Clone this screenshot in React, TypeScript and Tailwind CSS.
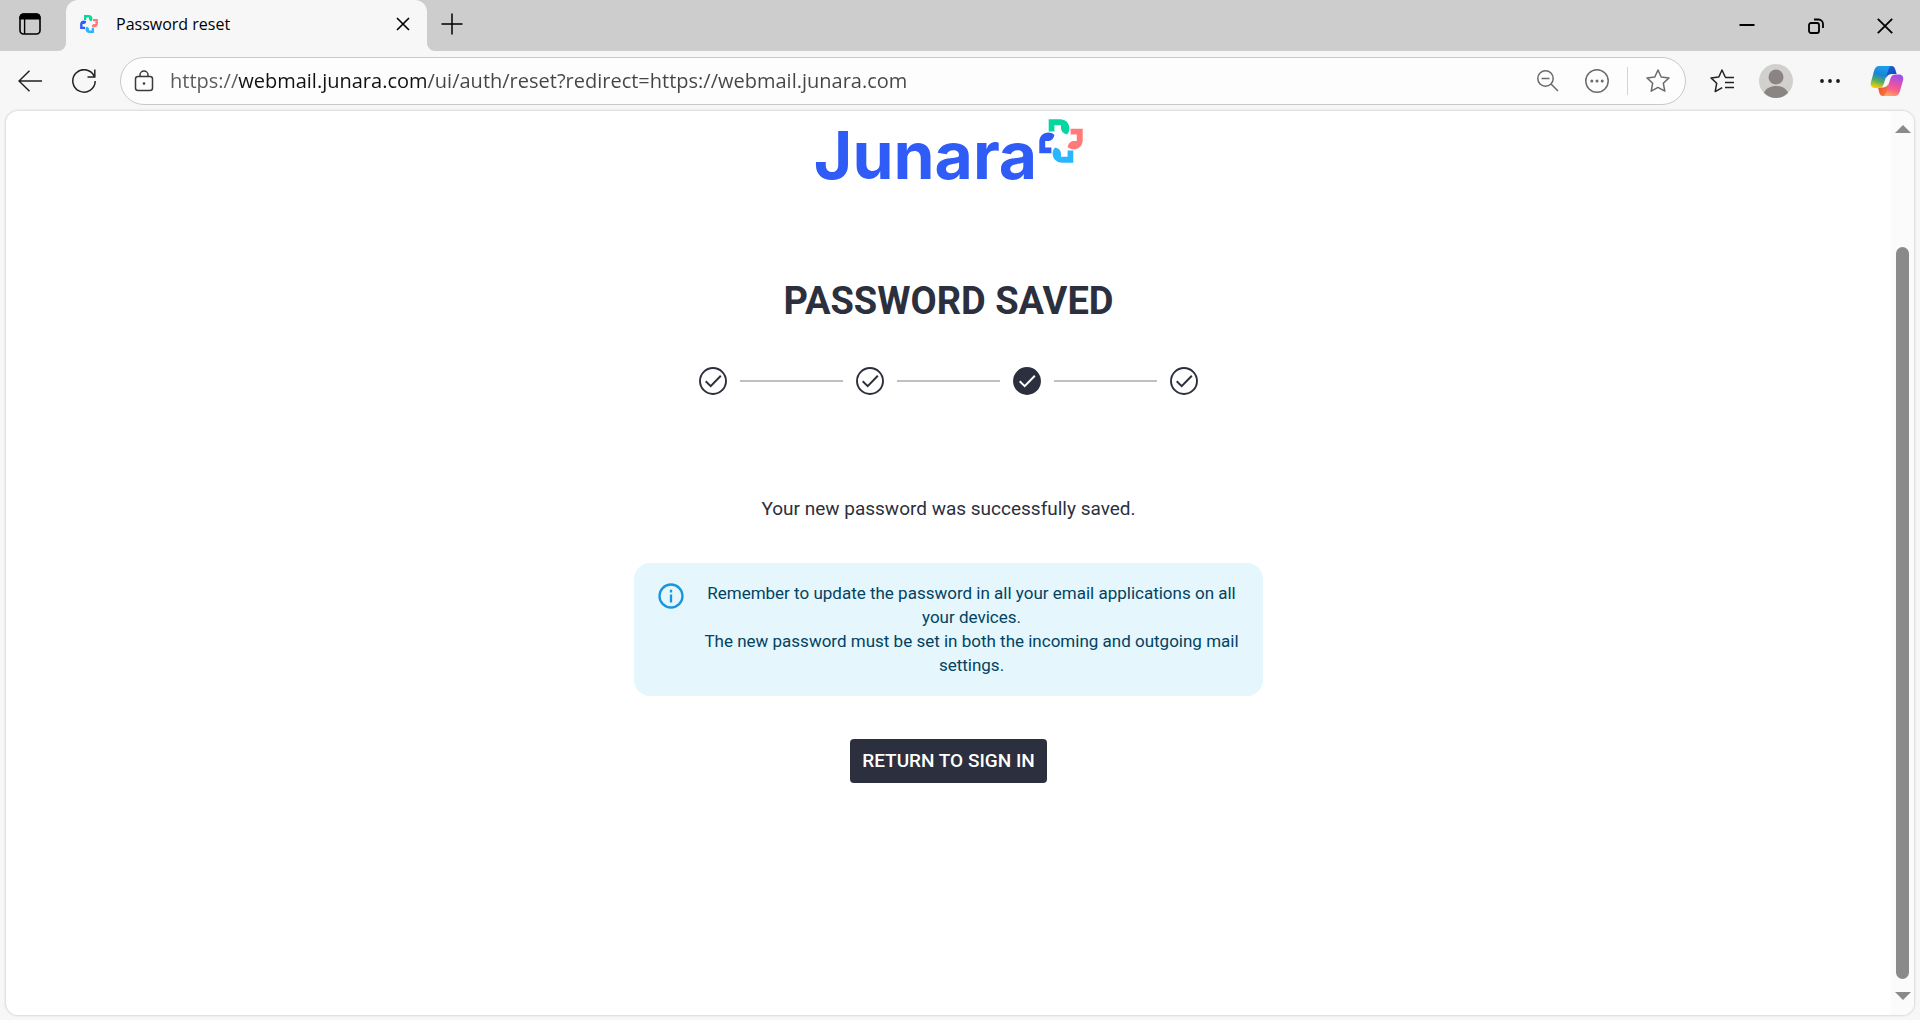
import React from 'react';
import { clsx } from 'clsx';

interface IconProps {
  className?: string;
}

const petals = ['#06d6a0', '#ff7a78', '#29b6ff', '#2f5bf6'];

// The mark is one hook shape, turned a quarter for each colour
const JunaraMark: React.FC<IconProps> = ({ className }) => (
  <svg viewBox="-22 -22 44 44" className={className} aria-hidden="true">
    {petals.map((color, i) => (
      <path
        key={color}
        fill={color}
        transform={`rotate(${i * 90})`}
        d="M-12.3-21.7H-1C4.6-21.7 8.4-17.800 8.4-12.6C8.4-10.4 7.6-8.400 6-6.6C2.300-7.4 .2-9.4 0-12.4V-15.8H-6.6V-9.600H-12.3Z"
      />
    ))}
  </svg>
);

const WorkspacesIcon: React.FC = () => (
  <svg viewBox="0 0 22 22" className="size-[22px]" fill="none" stroke="#000" aria-hidden="true">
    <rect x="1" y="1" width="20" height="20" rx="3.5" strokeWidth="1.6" />
    <path d="M1 6V4a3 3 0 0 1 3-3h14a3 3 0 0 1 3 3v2z" fill="#000" />
    <path d="M5.6 6v15" strokeWidth="1.4" />
  </svg>
);

const LockIcon: React.FC = () => (
  <svg viewBox="0 0 20 22" className="h-[22px] w-5" fill="none" stroke="#3b3b3b" strokeWidth="1.5" aria-hidden="true">
    <rect x="1.5" y="6.5" width="17" height="14" rx="2.5" />
    <path d="M6 6.5V5a4 4 0 0 1 8 0v1.5" />
    <circle cx="10" cy="13.5" r="1.3" fill="#3b3b3b" stroke="none" />
  </svg>
);

const CopilotIcon: React.FC = () => (
  <svg viewBox="0 0 34 32" className="h-8 w-[34px]" aria-hidden="true">
    <defs>
      <linearGradient id="cp-left" x1="0.6" y1="0" x2="0.35" y2="1">
        <stop offset="0.1" stopColor="#1b9bea" />
        <stop offset="0.4" stopColor="#1c83d6" />
        <stop offset="0.7" stopColor="#58ad5c" />
        <stop offset="1" stopColor="#f5cf0a" />
      </linearGradient>
      <linearGradient id="cp-right" x1="0.65" y1="0" x2="0.35" y2="1">
        <stop offset="0" stopColor="#9b50f0" />
        <stop offset="0.4" stopColor="#dc52b0" />
        <stop offset="0.7" stopColor="#f9608a" />
        <stop offset="1" stopColor="#ffa65a" />
      </linearGradient>
      <linearGradient id="cp-top" x1="0" y1="0" x2="1" y2="1">
        <stop offset="0" stopColor="#1a62d8" />
        <stop offset="1" stopColor="#1546b8" />
      </linearGradient>
      <linearGradient id="cp-bottom" x1="0" y1="0" x2="1" y2="1">
        <stop offset="0" stopColor="#ee4a2c" />
        <stop offset="1" stopColor="#fb7d45" />
      </linearGradient>
    </defs>
    <path d="M16 1h5.5c2 0 3 1.2 3.6 3l1.6 5h-4.5c-3 0-5 1.2-6 4z" fill="url(#cp-top)" />
    <path d="M18 31h-5c-2 0-3-1.2-3.6-3L8 22.5h4.5c3 0 5-1.2 6-4z" fill="url(#cp-bottom)" />
    <path d="M9 1h12.5c-1.8.5-2.5 2-3.2 4l-4.6 14c-.9 2.7-2.4 4-5 4H5c-3.4 0-5-2.400-4-6L4 6c1-3.300 2.500-5 5-5z" fill="url(#cp-left)" />
    <path d="M25 31H13c1.800-.5 2.500-2 3.200-4l4.200-13.500c.9-2.700 2.400-4 5-4H29c3.400 0 5 2.400 4 6l-3 10.500c-1 3.300-2.500 5-5 5z" fill="url(#cp-right)" />
  </svg>
);

const TitleBar: React.FC = () => (
  <header className="flex h-[51px] shrink-0">
    <div className="flex w-[66px] items-center rounded-br-lg bg-[#cdcdcd] pb-[3px] pl-[19px]">
      <button type="button" aria-label="Tab actions">
        <WorkspacesIcon />
      </button>
    </div>
    <div className="w-[361px] bg-[#cdcdcd]">
      <div className="flex h-full items-center rounded-t-xl bg-[#f7f7f7] pr-[17px] pb-[3px] pl-3.5">
        <JunaraMark className="size-[18px]" />
        <span className="ml-[18px] flex-1 text-base text-black">Password reset</span>
        <button type="button" aria-label="Close tab">
          <svg viewBox="0 0 14 14" className="size-3.5" stroke="#000" strokeWidth="1.6" aria-hidden="true">
            <path d="M1 1l12 12M13 1L1 13" />
          </svg>
        </button>
      </div>
    </div>
    <div className="flex flex-1 items-center rounded-bl-lg bg-[#cdcdcd] pl-3.5">
      <button type="button" aria-label="New tab" className="pb-[3px]">
        <svg viewBox="0 0 22 22" className="size-[22px]" stroke="#000" strokeWidth="1.5" aria-hidden="true">
          <path d="M11 .5v21M.5 11h21" />
        </svg>
      </button>
      <div className="ml-auto flex items-center gap-[53px] pr-[27px]">
        <button type="button" aria-label="Minimize">
          <svg viewBox="0 0 16 16" className="size-4" stroke="#000" strokeWidth="2" aria-hidden="true">
            <path d="M.5 7h15" />
          </svg>
        </button>
        <button type="button" aria-label="Restore">
          <svg viewBox="0 0 16 16" className="size-4" fill="none" stroke="#000" strokeWidth="1.8" aria-hidden="true">
            <rect x="1" y="5" width="10" height="10" rx="2" />
            <path d="M6 1.5h4.5a4.5 4.5 0 0 1 4.5 4.5v4" />
          </svg>
        </button>
        <button type="button" aria-label="Close window">
          <svg viewBox="0 0 16 16" className="size-4" stroke="#000" strokeWidth="1.8" aria-hidden="true">
            <path d="M.8.8l14.4 14.4M15.2.8L.8 15.2" />
          </svg>
        </button>
      </div>
    </div>
  </header>
);

const AddressBar: React.FC = () => (
  <div className="flex h-12 flex-1 items-center rounded-full border border-[#c9c9c9] bg-[#fdfdfd] pr-[15px] pl-[13px]">
    <LockIcon />
    {/* Host is darker than the rest of the address */}
    <input
      type="text"
      aria-label="Address"
      defaultValue="https://webmail.junara.com/ui/auth/reset?redirect=https://webmail.junara.com"
      className="ml-4 min-w-0 flex-1 bg-[linear-gradient(90deg,#5a5a5a_68px,#111_68px,#111_257px,#454545_257px)] bg-clip-text text-xl text-transparent outline-none"
    />
    <div className="flex items-center gap-[26px]">
      <button type="button" aria-label="Zoom out">
        <svg viewBox="0 0 22 22" className="size-[22px]" fill="none" stroke="#6b6b6b" strokeWidth="1.5" aria-hidden="true">
          <circle cx="8.5" cy="8.5" r="7.7" />
          <path d="M14 14l7 7M4.5 8.5h8" />
        </svg>
      </button>
      <button type="button" aria-label="Page actions">
        <svg viewBox="0 0 24 24" className="size-6" fill="none" stroke="#6b6b6b" strokeWidth="1.5" aria-hidden="true">
          <circle cx="12" cy="12" r="11.2" />
          <path d="M6.8 12h.01M12 12h.01M17.2 12h.01" strokeWidth="3" strokeLinecap="round" />
        </svg>
      </button>
    </div>
    <div className="mx-[18px] h-7 w-px bg-[#d4d4d4]" />
    <button type="button" aria-label="Add to favorites">
      <svg viewBox="0 0 24 24" className="size-6" fill="none" stroke="#6b6b6b" strokeWidth="1.5" strokeLinejoin="round" aria-hidden="true">
        <path d="M12 1l3.2 7 7.8.9-5.7 5.3 1.5 7.9L12 18.4l-6.8 3.7 1.5-7.9L1 8.9 8.8 8z" />
      </svg>
    </button>
  </div>
);

const Toolbar: React.FC = () => (
  <nav aria-label="Browser" className="flex h-[60px] shrink-0 items-center pr-4 pl-[18px]">
    <button type="button" aria-label="Back">
      <svg viewBox="0 0 24 22" className="h-[22px] w-6" fill="none" stroke="#222" strokeWidth="1.5" aria-hidden="true">
        <path d="M24 11H1M11.5.8L1 11l10.5 10.2" />
      </svg>
    </button>
    <button type="button" aria-label="Refresh" className="ml-[30px]">
      <svg viewBox="0 0 24 24" className="size-6" fill="none" stroke="#222" strokeWidth="1.5" aria-hidden="true">
        <path d="M22.5 8A11.2 11.2 0 1 0 23.2 12M22.8.5V8H15.5" />
      </svg>
    </button>
    <div className="flex flex-1 px-6">
      <AddressBar />
    </div>
    <button type="button" aria-label="Favorites">
      <svg viewBox="0 0 24 24" className="size-6" fill="none" stroke="#222" strokeWidth="1.5" strokeLinejoin="round" aria-hidden="true">
        <path d="M15.2 8L12 1 8.8 8 1 8.9l5.7 5.3-1.5 8.4 7-4M15 8.5h9M15 13.5h9M15 18.5h9" />
      </svg>
    </button>
    <button type="button" aria-label="Profile" className="ml-[25px]">
      <svg viewBox="0 0 34 34" className="size-[34px]" aria-hidden="true">
        <circle cx="17" cy="17" r="17" fill="#d2d0ce" />
        <circle cx="17" cy="13" r="7.5" fill="#8a8583" />
        <path d="M5 29C7 24 11.5 22 17 22s10 2 12 7a17 17 0 0 1-24 0z" fill="#8a8583" />
      </svg>
    </button>
    <button type="button" aria-label="Settings and more" className="ml-[26px]">
      <svg viewBox="0 0 22 22" className="size-[22px]" fill="#1a1a1a" aria-hidden="true">
        <circle cx="3" cy="11" r="1.9" />
        <circle cx="11" cy="11" r="1.9" />
        <circle cx="19" cy="11" r="1.9" />
      </svg>
    </button>
    <button type="button" aria-label="Copilot" className="ml-[29px]">
      <CopilotIcon />
    </button>
  </nav>
);

const steps = [
  { label: 'Identify', current: false },
  { label: 'Verify', current: false },
  { label: 'New password', current: true },
  { label: 'Done', current: false },
];

const Stepper: React.FC = () => (
  <ol className="mt-11 flex items-center gap-[13px]">
    {steps.map((step, i) => (
      <React.Fragment key={step.label}>
        {i > 0 && <li aria-hidden="true" className="h-0.5 w-[103px] bg-[#bfbfc6]" />}
        <li aria-label={step.label} aria-current={step.current ? 'step' : undefined}>
          <svg viewBox="0 0 28 28" className="size-7" fill="none" stroke="#2c2f3d" aria-hidden="true">
            <circle cx="14" cy="14" r="13" strokeWidth="1.9" fill={step.current ? '#2c2f3d' : 'none'} />
            <path
              d="M6.7 14.3l5 4.9L21.8 8.8"
              strokeWidth="2"
              className={clsx(step.current && 'stroke-white')}
            />
          </svg>
        </li>
      </React.Fragment>
    ))}
  </ol>
);

const InfoBox: React.FC = () => (
  <div className="mt-10 flex w-full max-w-[629px] gap-[18px] rounded-2xl bg-[#e5f6fd] pt-[18px] pr-[22px] pb-[19px] pl-6">
    <svg viewBox="0 0 26 26" className="mt-0.5 size-[26px] shrink-0" fill="none" stroke="#1795dd" aria-hidden="true">
      <circle cx="13" cy="13" r="11.5" strokeWidth="2.3" />
      <path d="M13 11.5v8M13 6.8v2.6" strokeWidth="2.3" />
    </svg>
    <p className="flex-1 text-center text-[17px] leading-6 text-[#014361]">
      Remember to update the password in all your email applications on all your devices.
      <br />
      The new password must be set in both the incoming and outgoing mail settings.
    </p>
  </div>
);

const Scrollbar: React.FC = () => (
  <div className="flex w-[23px] shrink-0 flex-col items-center bg-[#fbfbfb] pt-3.5 pb-[15px]" aria-hidden="true">
    <svg viewBox="0 0 16 8" className="h-2 w-4 shrink-0" fill="#8a8a8a">
      <path d="M0 8L8 0l8 8z" />
    </svg>
    <div className="flex w-[13px] flex-1 flex-col pt-[114px] pb-[13px]">
      <div className="flex-1 rounded-full bg-[#8a8a8a]" />
    </div>
    <svg viewBox="0 0 16 8" className="h-2 w-4 shrink-0" fill="#8a8a8a">
      <path d="M0 0l8 8 8-8z" />
    </svg>
  </div>
);

export default function App() {
  return (
    <div className="flex h-screen flex-col bg-[#f7f7f7] font-['Open_Sans','Noto_Sans',sans-serif]">
      <TitleBar />
      <Toolbar />
      <div className="mx-1.5 mb-[5px] flex min-h-0 flex-1 overflow-hidden rounded-xl bg-white shadow-[0_0_2px_1px_rgba(0,0,0,0.12)]">
        <main className="flex flex-1 flex-col items-center font-['Roboto',sans-serif] text-[#2c2f3d]">
          <div className="flex items-start gap-0.5 pt-2">
            <span className="pt-1.5 font-['Inter',sans-serif] text-[66px] leading-[60px] font-bold text-[#2f5bf6]">
              Junara
            </span>
            <JunaraMark className="size-11" />
          </div>
          <h1 className="mt-[94px] text-[38px] leading-[44px] font-bold">PASSWORD SAVED</h1>
          <Stepper />
          <p className="mt-[100px] text-[19px] leading-7">Your new password was successfully saved.</p>
          <InfoBox />
          <button
            type="button"
            className="mt-[43px] h-11 rounded bg-[#2c2f3d] px-3 text-[19px] leading-6 font-medium text-white"
          >
            RETURN TO SIGN IN
          </button>
        </main>
        <Scrollbar />
      </div>
    </div>
  );
}
